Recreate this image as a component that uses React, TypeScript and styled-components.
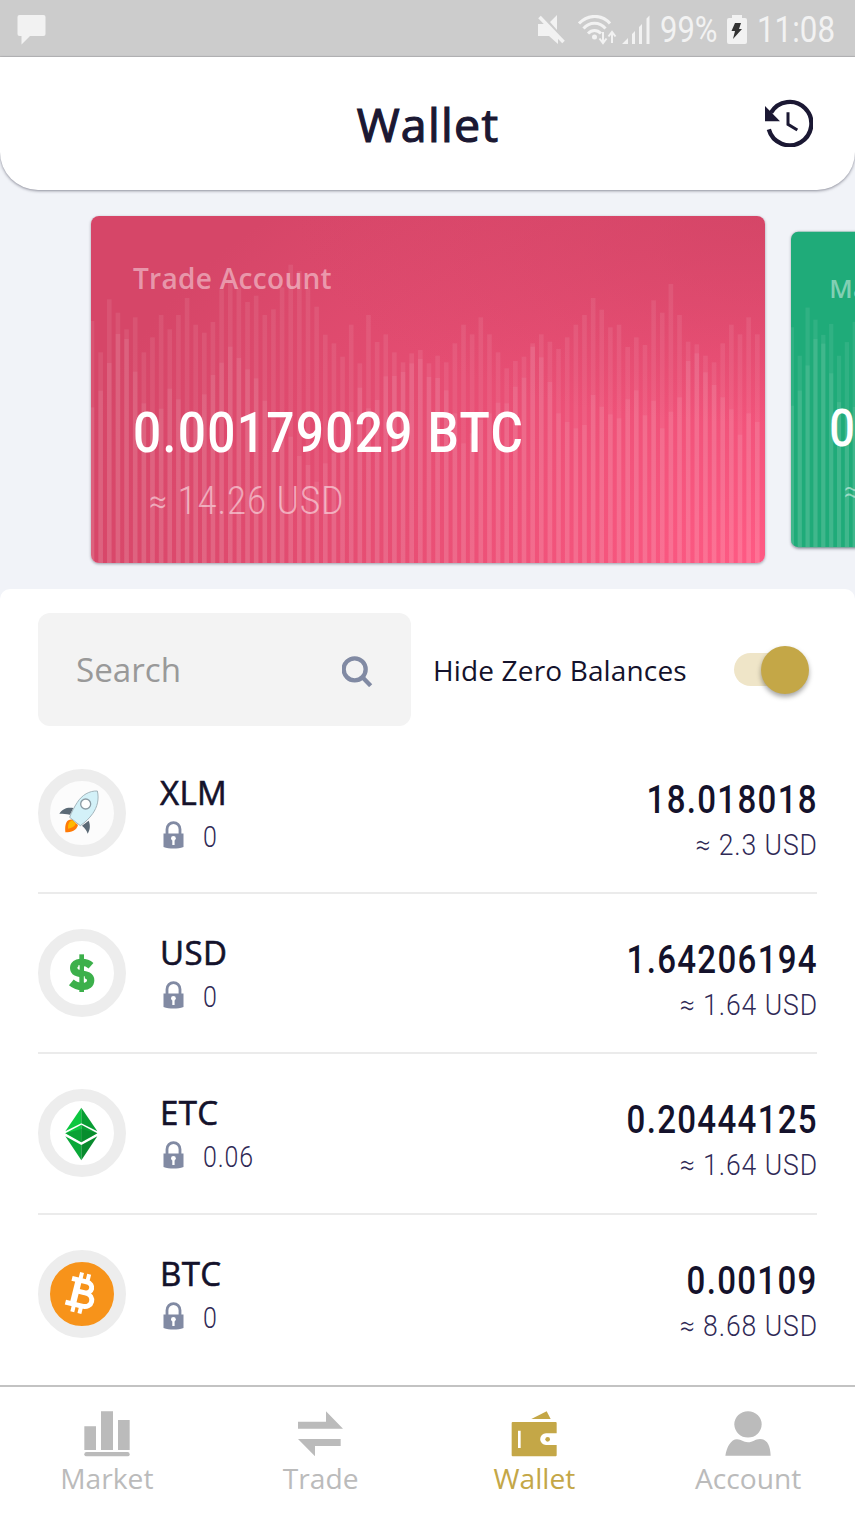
import React from "react";
import styled, { createGlobalStyle } from "styled-components";

const GlobalStyle = createGlobalStyle`
  * { box-sizing: border-box; }
  body { margin: 0; background: #f1f3f8; font-family: "Open Sans", "Noto Sans", sans-serif; }
`;

const NAVY = "#14122b";
const GOLD = "#c4a747";

const Screen = styled.div`
  width: 855px;
  height: 1520px;
  overflow: hidden;
  display: flex;
  flex-direction: column;
  background: #f1f3f8;
`;

const StatusBar = styled.div`
  height: 57px;
  flex: none;
  display: flex;
  align-items: center;
  justify-content: space-between;
  padding: 3px 22px 0 17px;
  background: #ccc;
  border-bottom: 1px solid #bcbcbc;
`;

const StatusGroup = styled.div`
  display: flex;
  align-items: center;
  height: 100%;
`;

const StatusIcon = styled.svg<{ $gap?: number }>`
  display: block;
  flex: none;
  margin-right: ${(p) => p.$gap ?? 0}px;
`;

const Num = styled.span<{
  $size: number;
  $line: number;
  $weight?: number;
  $scale?: number;
  $spacing?: number;
  $right?: boolean;
  $color?: string;
}>`
  display: block;
  white-space: pre;
  font-family: Roboto, sans-serif;
  font-size: ${(p) => p.$size}px;
  line-height: ${(p) => p.$line}px;
  font-weight: ${(p) => p.$weight ?? 400};
  letter-spacing: ${(p) => p.$spacing ?? 0}px;
  margin-right: ${(p) => (p.$right ? -1 : 0)}px;
  color: ${(p) => p.$color ?? "inherit"};
  transform: scaleX(${(p) => p.$scale ?? 1});
  transform-origin: ${(p) => (p.$right ? "right" : "left")} center;
`;

const StatusText = styled.div<{ $width: number }>`
  width: ${(p) => p.$width}px;
  color: #f2f2f2;
`;

const Header = styled.header`
  height: 133px;
  flex: none;
  display: grid;
  grid-template-columns: 90px 1fr 92px;
  align-items: center;
  background: #fff;
  border-radius: 0 0 38px 38px;
  box-shadow: 0 1px 3px rgba(40, 40, 60, 0.5);
`;

const Title = styled.h1`
  margin: 0;
  grid-column: 2;
  padding-left: 3px;
  text-align: center;
  font-size: 46.5px;
  line-height: 60px;
  font-weight: 400;
  letter-spacing: 1.3px;
  color: #1b1833;
  -webkit-text-stroke: 1.2px #1b1833;
`;

const HistoryIcon = styled.svg`
  margin-bottom: 3px;
`;

const Carousel = styled.div`
  height: 399px;
  flex: none;
  display: flex;
  gap: 26px;
  padding: 26px 0 0 91px;
  overflow: hidden;
`;

const AccountCard = styled.section<{ $side?: boolean; $bg: string }>`
  width: 674px;
  height: 347px;
  flex: none;
  display: grid;
  border-radius: 8px;
  overflow: hidden;
  background: ${(p) => p.$bg};
  box-shadow: 0 1px 3px rgba(30, 30, 50, 0.4);
  transform: ${(p) => (p.$side ? "scale(0.909)" : "none")};
  transform-origin: left center;
`;

const Bars = styled.svg`
  grid-area: 1 / 1;
  display: block;
`;

const CardBody = styled.div`
  grid-area: 1 / 1;
  padding: 42px 42px 0;
  color: #fff;
`;

const CardLabel = styled.div`
  font-size: 28px;
  line-height: 40px;
  font-weight: 600;
  letter-spacing: 0.3px;
  color: rgba(255, 255, 255, 0.45);
`;

const CardAmount = styled.div`
  padding-top: 100px;
`;

const CardApprox = styled.div`
  padding: 11px 0 0 16px;
`;

const Almost = styled.span<{ $size: number }>`
  font-size: ${(p) => p.$size}px;
`;

const Panel = styled.main`
  flex: 1;
  min-height: 0;
  overflow: hidden;
  padding: 24px 38px 0;
  background: #fff;
  border-radius: 10px 10px 0 0;
`;

const Filters = styled.div`
  display: flex;
  align-items: center;
  height: 113px;
`;

const SearchBox = styled.div`
  width: 373px;
  height: 113px;
  display: flex;
  align-items: center;
  justify-content: space-between;
  padding: 0 38px;
  border-radius: 12px;
  background: #f3f3f3;
`;

const SearchText = styled.span`
  font-size: 33.2px;
  line-height: 46px;
  color: #999;
`;

const SearchIcon = styled.svg`
  margin-top: 4px;
`;

const ToggleLabel = styled.span`
  width: 300px;
  padding-left: 22px;
  font-size: 28px;
  line-height: 40px;
  letter-spacing: 0.15px;
  color: ${NAVY};
  white-space: nowrap;
`;

const Track = styled.div`
  width: 66px;
  height: 33px;
  margin-left: 23px;
  display: flex;
  align-items: center;
  justify-content: flex-end;
  border-radius: 17px;
  background: #efe5c8;
`;

const Thumb = styled.div`
  width: 48px;
  height: 48px;
  flex: none;
  margin-right: -9px;
  border-radius: 50%;
  background: ${GOLD};
  box-shadow: 0 3px 5px rgba(0, 0, 0, 0.35);
`;

const Row = styled.div`
  height: 160.4px;
  display: flex;
  border-bottom: 2px solid #ebebeb;

  &:last-child {
    border-bottom: 0;
  }
`;

const List = styled.div`
  padding-top: 7.5px;
`;

const CoinRing = styled.div<{ $fill: string }>`
  width: 88px;
  height: 88px;
  margin-top: 35px;
  flex: none;
  border-radius: 50%;
  border: 12.5px solid #ededed;
  background: ${(p) => p.$fill};
`;

const Coin = styled.div`
  flex: 1;
  padding: 36px 0 0 34px;
`;

const CoinName = styled.div`
  font-size: 33px;
  line-height: 46px;
  letter-spacing: 0.4px;
  color: ${NAVY};
  -webkit-text-stroke: 0.6px ${NAVY};
`;

const Locked = styled.div`
  height: 44px;
  margin-top: -1px;
  display: flex;
  align-items: center;
  gap: 19px;
  padding-left: 3px;
`;

const LockIcon = styled.svg`
  margin-bottom: 4px;
`;

const Balance = styled.div`
  display: flex;
  flex-direction: column;
  align-items: flex-end;
  padding-top: 43px;
`;

const TabBar = styled.nav`
  height: 135px;
  flex: none;
  display: grid;
  grid-template-columns: repeat(4, 1fr);
  border-top: 2px solid #c3c3c3;
  background: #fff;
`;

const Tab = styled.div<{ $active?: boolean }>`
  display: flex;
  flex-direction: column;
  align-items: center;
  padding-top: 24px;
  color: ${(p) => (p.$active ? GOLD : "#bbb")};
`;

const TabLabel = styled.span`
  margin-top: 1px;
  font-size: 28.2px;
  line-height: 40px;
`;

/* Bar heights measured down from the top edge of a card, in thirds of a pixel. */
const BACK = [
  315, 409, 250, 290, 340, 304, 409, 364, 297, 340, 297, 246, 326, 350, 318, 220, 198, 214, 258, 239, 297, 280, 214,
  146, 165, 214, 272, 356, 382, 422, 326, 442, 297, 378, 355, 409, 439, 412, 402, 442, 419, 439, 382, 326, 355, 304,
  355, 409, 457, 435, 422, 382, 355, 377, 399, 364, 326, 297, 246, 281, 334, 326, 393, 364, 387, 253, 290, 204, 297,
  377, 385, 419, 439, 382, 326, 355, 304, 355,
];
const FRONT = [
  574, 524, 441, 354, 369, 467, 562, 592, 578, 518, 550, 600, 602, 535, 477, 440, 392, 426, 460, 487, 554, 612, 642,
  662, 720, 747, 797, 742, 712, 672, 588, 515, 577, 552, 481, 480, 468, 442, 429, 483, 486, 523, 592, 682, 652, 612,
  592, 560, 562, 512, 485, 392, 424, 498, 592, 618, 637, 627, 537, 572, 595, 607, 550, 523, 598, 554, 637, 587, 544,
  435, 412, 469, 507, 544, 580, 656, 592, 618,
];

const CardBars = () => (
  <Bars width="674" height="347" viewBox="0 0 2022 1041">
    {[BACK, FRONT].map((series, s) => (
      <g key={s} fill="#fff" fillOpacity={0.08}>
        {series.map((top, i) => (
          <rect key={i} x={-4 + i * 25.92} y={top} width="14" height={1041 - top} />
        ))}
      </g>
    ))}
  </Bars>
);

const Lock = () => (
  <LockIcon width="21" height="28" viewBox="0 0 21 28">
    <path d="M4 14V8.300a6.500 6.700 0 0 1 13 0V14" fill="none" stroke="#818aa3" strokeWidth="2.800" />
    <path d="M.5 12.500h20v13.600c-6 2-14 2-20 0z" fill="#818aa3" />
    <circle cx="10.400" cy="17.300" r="2.400" fill="#fff" />
    <path d="M9.300 18h2.300v6H9.300z" fill="#fff" />
  </LockIcon>
);

const Rocket = () => (
  <svg width="63" height="63" viewBox="0 0 189 189">
    <path d="M67 116c-14-2-24 8-21 38 18 0 34-6 38-22z" fill="#ff7a05" />
    <path d="M67 118c-8 2-14 10-13 25 12-1 20-6 24-16z" fill="#ffb800" />
    <path d="M28 98c10-16 25-20 42-17l-10 20c-12-3-20-3-32-3z" fill="#5b6a76" />
    <path d="M96 134l20-15c6 14 4 28-3 39-3-9-7-16-17-24z" fill="#5b6a76" />
    <path d="M142 30c-24-1-46 12-60 34-9 14-18 30-23 45l32 25c14-10 27-22 37-36 14-20 20-44 14-68z" fill="#d3f1f8" stroke="#95a7af" strokeWidth="2.500" />
    <circle cx="107" cy="69" r="15" fill="#fff" stroke="#8b9ba4" strokeWidth="4" />
  </svg>
);

const Dollar = () => (
  <svg width="63" height="63" viewBox="0 0 189 189">
    <g fill="none" stroke="#3cb04b">
      <path d="M123 74c-16-14-52-14-52 7 0 27 51 9 51 37 0 24-38 23-58 6" strokeWidth="22" />
      <path d="M95 40v113" strokeWidth="14" />
    </g>
    <path d="M87 72v14M103 106v18" stroke="#fff" strokeWidth="3" />
  </svg>
);

const Classic = () => (
  <svg width="63" height="63" viewBox="0 0 189 189">
    <path d="M94 20L46 91l48-24z" fill="#0cc740" />
    <path d="M94 20l48 71-48-24z" fill="#089d33" />
    <path d="M94 71L46 97l48 27z" fill="#0cc740" />
    <path d="M94 71l48 26-48 27z" fill="#089d33" />
    <path d="M94 84L46 97l48 27 48-27z" fill="#067d28" fillOpacity=".5" />
    <path d="M46 106l48 26v46z" fill="#0aa838" />
    <path d="M142 106l-48 26v46z" fill="#078a2d" />
  </svg>
);

const Bitcoin = () => (
  <svg width="63" height="63" viewBox="0 0 189 189">
    <g transform="rotate(14 94 94)" fill="none" stroke="#fff">
      <path d="M56 57h45c26 0 26 33 0 33H79h26c33 0 33 41 0 41H54" strokeWidth="15" />
      <path d="M77 55v78" strokeWidth="19" />
      <path d="M81 33v22M103 33v22M81 132v22M103 132v22" strokeWidth="12" />
    </g>
  </svg>
);

const coins = [
  { name: "XLM", locked: "0", amount: "18.018018", usd: "2.3", fill: "#fcfcfc", Icon: Rocket },
  { name: "USD", locked: "0", amount: "1.64206194", usd: "1.64", fill: "#fff", Icon: Dollar },
  { name: "ETC", locked: "0.06", amount: "0.20444125", usd: "1.64", fill: "#fff", Icon: Classic },
  { name: "BTC", locked: "0", amount: "0.00109", usd: "8.68", fill: "#f7931a", Icon: Bitcoin },
];

const MarketIcon = () => (
  <svg width="46" height="46" viewBox="0 0 138 138" fill="currentColor">
    <path d="M1 46h35v71H1zM51 1h36v116H51zM102 27h35v90h-35z" />
    <rect x="1" y="123" width="136" height="13" rx="6.500" />
  </svg>
);
const TradeIcon = () => (
  <svg width="46" height="46" viewBox="0 0 138 138" fill="currentColor">
    <path d="M0 32h84V1l51 52H0zM0 84h128v21H51v31z" />
  </svg>
);
const WalletIcon = () => (
  <svg width="46" height="46" viewBox="0 0 138 138" fill="currentColor">
    <path d="M61 24L107 1l12 23z" />
    <path d="M5 33h129q3 0 3 3v31h-32a17.500 17.500 0 0 0 0 35h32v31q0 3-3 3H5q-3 0-3-3V36q0-3 3-3zM21 59v52h8V59z" fillRule="evenodd" />
    <circle cx="110" cy="85" r="7" />
  </svg>
);
const AccountIcon = () => (
  <svg width="46" height="46" viewBox="0 0 138 138" fill="currentColor">
    <ellipse cx="69" cy="40" rx="41" ry="39.500" />
    <path d="M1 134C5 108 18 85 36 85c14 0 18 9 33 9s21-10 36-10c20 0 31 17 32 50z" />
  </svg>
);

const tabs = [
  { label: "Market", Icon: MarketIcon },
  { label: "Trade", Icon: TradeIcon },
  { label: "Wallet", Icon: WalletIcon },
  { label: "Account", Icon: AccountIcon },
];

const RED =
  "radial-gradient(ellipse 70% 60% at 100% 0%, rgba(205,66,98,.6), rgba(205,66,98,0)), radial-gradient(ellipse 105% 140% at 100% 100%, #ff5a84 0%, #e94f75 50%, #d64668 100%)";

export default function App() {
  return (
    <>
      <GlobalStyle />
      <Screen>
        <StatusBar>
          <StatusIcon width="30" height="32" viewBox="0 0 30 32">
            <path d="M2.500 1h24q2 0 2 2v17q0 2-2 2H13l-8.500 8.500V22h-2q-2 0-2-2V3q0-2 2-2z" fill="#f2f2f2" />
          </StatusIcon>
          <StatusGroup>
            <StatusIcon width="28" height="30" viewBox="0 0 28 30" $gap={12}>
              <path d="M0 9h7l13 13v7l-9-8H0zM12 7l7-7v15z" fill="#f2f2f2" />
              <path d="M1.500 2l24 25" stroke="#f2f2f2" strokeWidth="3.600" />
            </StatusIcon>
            <StatusIcon width="40" height="30" viewBox="0 0 40 30" $gap={3}>
              <g fill="none" stroke="#f2f2f2" strokeWidth="3">
                <path d="M1 8.500C10-1 24-1 32 8.500" />
                <path d="M5.500 13.500c6-7 16-7 22 0" />
                <path d="M10 18.500c4-4 9-4 13 0" />
              </g>
              <circle cx="16.500" cy="22" r="2.500" fill="#f2f2f2" />
              <path d="M25 17v10M21.500 23.500L25 28l3.500-4.500M34 28V18M30.500 21.500L34 17l3.500 4.500" fill="none" stroke="#f2f2f2" strokeWidth="2" />
            </StatusIcon>
            <StatusIcon width="29" height="30" viewBox="0 0 29 30" $gap={10}>
              <path d="M1 29l6-6v6zM11 19l3-3v13h-3zM18 12l3-3v20h-3zM25.500 3.500l3-3V29h-3z" fill="#f2f2f2" />
            </StatusIcon>
            <StatusText $width={67}>
              <Num $size={36} $line={44} $scale={0.86}>99%</Num>
            </StatusText>
            <StatusIcon width="20" height="30" viewBox="0 0 20 30" $gap={10}>
              <path d="M5 0h10v3h3q2 0 2 2v22q0 2-2 2H2q-2 0-2-2V5q0-2 2-2h3z" fill="#f2f2f2" />
              <path d="M8 8h6l-2 6h3L6 24l2-8H4.500z" fill="#333" />
            </StatusIcon>
            <StatusText $width={76}>
              <Num $size={36} $line={44} $scale={0.87}>11:08</Num>
            </StatusText>
          </StatusGroup>
        </StatusBar>

        <Header>
          <Title>Wallet</Title>
          <HistoryIcon width="50" height="50" viewBox="0 0 150 150">
            <path d="M24 47A65 65 0 1 1 17.500 97" fill="none" stroke="#1b1833" strokeWidth="13" />
            <path d="M6 27l45 46H6z" fill="#1b1833" />
            <path d="M75 46v36l28 17" fill="none" stroke="#1b1833" strokeWidth="9" />
          </HistoryIcon>
        </Header>

        <Carousel>
          <AccountCard $bg={RED}>
            <CardBars />
            <CardBody>
              <CardLabel>Trade Account</CardLabel>
              <CardAmount>
                <Num $size={56} $line={70} $weight={500} $scale={0.886} $spacing={1.5}>0.00179029 BTC</Num>
              </CardAmount>
              <CardApprox>
                <Num $size={38} $line={44} $weight={300} $scale={0.885} $spacing={1.5} $color="rgba(255,255,255,.5)">
                  <Almost $size={36}>≈</Almost> 14.26 USD
                </Num>
              </CardApprox>
            </CardBody>
          </AccountCard>
          <AccountCard $side $bg="#1fab79">
            <CardBars />
            <CardBody>
              <CardLabel>Margin Account</CardLabel>
              <CardAmount>
                <Num $size={56} $line={70} $weight={500} $scale={0.886} $spacing={1.5}>0.00000000 BTC</Num>
              </CardAmount>
              <CardApprox>
                <Num $size={38} $line={44} $weight={300} $scale={0.885} $spacing={1.5} $color="rgba(255,255,255,.5)">
                  <Almost $size={36}>≈</Almost> 0 USD
                </Num>
              </CardApprox>
            </CardBody>
          </AccountCard>
        </Carousel>

        <Panel>
          <Filters>
            <SearchBox>
              <SearchText>Search</SearchText>
              <SearchIcon width="31" height="31" viewBox="0 0 93 93">
                <circle cx="38" cy="40" r="33" fill="none" stroke="#818aa3" strokeWidth="13" />
                <path d="M60 62l26 27" stroke="#818aa3" strokeWidth="13" />
              </SearchIcon>
            </SearchBox>
            <ToggleLabel>Hide Zero Balances</ToggleLabel>
            <Track>
              <Thumb />
            </Track>
          </Filters>
          <List>
            {coins.map(({ name, locked, amount, usd, fill, Icon }) => (
              <Row key={name}>
                <CoinRing $fill={fill}>
                  <Icon />
                </CoinRing>
                <Coin>
                  <CoinName>{name}</CoinName>
                  <Locked>
                    <Lock />
                    <Num $size={29} $line={44} $weight={300} $scale={0.86} $spacing={1} $color="#2f2955">{locked}</Num>
                  </Locked>
                </Coin>
                <Balance>
                  <Num $size={38} $line={46} $weight={500} $scale={0.87} $spacing={1.5} $right $color={NAVY}>{amount}</Num>
                  <Num $size={29} $line={44} $weight={300} $scale={0.915} $spacing={1} $right $color="#2f2955">
                    <Almost $size={29}>≈</Almost> {usd} USD
                  </Num>
                </Balance>
              </Row>
            ))}
          </List>
        </Panel>

        <TabBar>
          {tabs.map(({ label, Icon }) => (
            <Tab key={label} $active={label === "Wallet"}>
              <Icon />
              <TabLabel>{label}</TabLabel>
            </Tab>
          ))}
        </TabBar>
      </Screen>
    </>
  );
}
